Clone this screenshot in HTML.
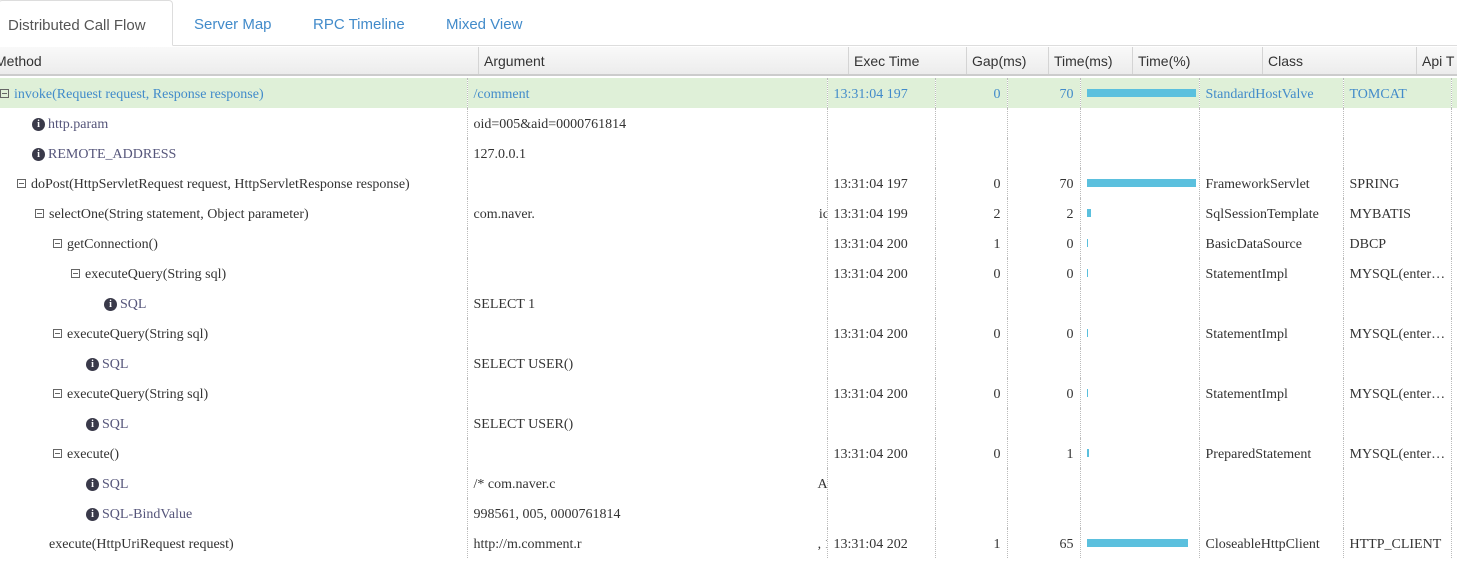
<!DOCTYPE html>
<html><head><meta charset="utf-8"><style>
*{margin:0;padding:0;box-sizing:border-box}
body{width:1457px;height:562px;overflow:hidden;background:#fff;position:relative;font-family:"Liberation Serif",serif;font-size:14px;color:#333}
.tabs{position:absolute;left:0;top:0;width:1457px;height:46px;border-bottom:1px solid #ddd}
.tab{position:absolute;top:0;height:46px;line-height:49px;font-family:"Liberation Sans",sans-serif;font-size:15px;color:#428bca}
.tab.act{left:-2px;width:175px;border:1px solid #ddd;border-bottom:1px solid #fff;border-radius:4px 4px 0 0;color:#555;padding-left:9px;background:#fff}
.hdr{position:absolute;left:0;top:47px;width:1457px;height:29px;background:linear-gradient(#f9f9f9,#ececec);border-bottom:2px solid #ccc;font-family:"Liberation Sans",sans-serif;font-size:14px;color:#333}
.hc{position:absolute;top:0;height:27px;line-height:29px;padding-left:5px;border-left:1px solid #d4d4d4}
table{position:absolute;left:0;top:78px;border-collapse:collapse;table-layout:fixed;width:1457px}
td{height:30px;padding:3px 6px 0;white-space:nowrap;overflow:hidden;border-left:1px dotted #bbb;vertical-align:middle}
td:first-child{border-left:none;padding-left:0}
tr.sel td{background:#dff0d8;color:#428bca}
.r{text-align:right;padding-right:6px}
.bx{display:inline-block;width:9px;height:9px;border:1px solid #666;position:relative;vertical-align:0px;margin-right:5px}
.bx:after{content:"";position:absolute;left:1px;top:3px;width:5px;height:1px;background:#666}
.ic{display:inline-block;width:13px;height:13px;border-radius:50%;background:#3a3a4a;color:#fff;font:bold 10px "Liberation Serif",serif;text-align:center;line-height:13px;margin-right:3px;vertical-align:text-top;margin-top:1px}
.lb{color:#55557a}
.bar{height:8px;background:#5bc0de;margin-top:-3px}
</style></head><body>
<div class="tabs">
<div class="tab act">Distributed Call Flow</div>
<div class="tab" style="left:194px">Server Map</div>
<div class="tab" style="left:313px">RPC Timeline</div>
<div class="tab" style="left:446px">Mixed View</div>
</div>
<div class="hdr">
<div class="hc" style="left:-10px;border:none">Method</div>
<div class="hc" style="left:478px">Argument</div>
<div class="hc" style="left:848px">Exec Time</div>
<div class="hc" style="left:966px">Gap(ms)</div>
<div class="hc" style="left:1048px">Time(ms)</div>
<div class="hc" style="left:1132px">Time(%)</div>
<div class="hc" style="left:1262px">Class</div>
<div class="hc" style="left:1416px">Api T</div>
</div>
<table>
<colgroup><col style="width:467px"><col style="width:360px"><col style="width:108px"><col style="width:72px"><col style="width:73px"><col style="width:119px"><col style="width:144px"><col style="width:108px"><col style="width:6px"></colgroup>
<tr class="sel"><td><span class="bx" style="margin-left:0"></span>invoke(Request request, Response response)</td><td>/comment</td><td>13:31:04 197</td><td class="r">0</td><td class="r">70</td><td><div class="bar" style="width:109px"></div></td><td>StandardHostValve</td><td>TOMCAT</td><td></td></tr>
<tr><td style="padding-left:32px"><span class="ic">i</span><span class="lb">http.param</span></td><td>oid=005&amp;aid=0000761814</td><td></td><td></td><td></td><td></td><td></td><td></td><td></td></tr>
<tr><td style="padding-left:32px"><span class="ic">i</span><span class="lb">REMOTE_ADDRESS</span></td><td>127.0.0.1</td><td></td><td></td><td></td><td></td><td></td><td></td><td></td></tr>
<tr><td style="padding-left:17px"><span class="bx"></span>doPost(HttpServletRequest request, HttpServletResponse response)</td><td></td><td>13:31:04 197</td><td class="r">0</td><td class="r">70</td><td><div class="bar" style="width:109px"></div></td><td>FrameworkServlet</td><td>SPRING</td><td></td></tr>
<tr><td style="padding-left:35px"><span class="bx"></span>selectOne(String statement, Object parameter)</td><td>com.naver.<span style="display:inline-block;width:284px"></span>ic</td><td>13:31:04 199</td><td class="r">2</td><td class="r">2</td><td><div class="bar" style="width:4px"></div></td><td>SqlSessionTemplate</td><td>MYBATIS</td><td></td></tr>
<tr><td style="padding-left:53px"><span class="bx"></span>getConnection()</td><td></td><td>13:31:04 200</td><td class="r">1</td><td class="r">0</td><td><div class="bar" style="width:1px"></div></td><td>BasicDataSource</td><td>DBCP</td><td></td></tr>
<tr><td style="padding-left:71px"><span class="bx"></span>executeQuery(String sql)</td><td></td><td>13:31:04 200</td><td class="r">0</td><td class="r">0</td><td><div class="bar" style="width:1px"></div></td><td>StatementImpl</td><td>MYSQL(enter…</td><td></td></tr>
<tr><td style="padding-left:104px"><span class="ic">i</span><span class="lb">SQL</span></td><td>SELECT 1</td><td></td><td></td><td></td><td></td><td></td><td></td><td></td></tr>
<tr><td style="padding-left:53px"><span class="bx"></span>executeQuery(String sql)</td><td></td><td>13:31:04 200</td><td class="r">0</td><td class="r">0</td><td><div class="bar" style="width:1px"></div></td><td>StatementImpl</td><td>MYSQL(enter…</td><td></td></tr>
<tr><td style="padding-left:86px"><span class="ic">i</span><span class="lb">SQL</span></td><td>SELECT USER()</td><td></td><td></td><td></td><td></td><td></td><td></td><td></td></tr>
<tr><td style="padding-left:53px"><span class="bx"></span>executeQuery(String sql)</td><td></td><td>13:31:04 200</td><td class="r">0</td><td class="r">0</td><td><div class="bar" style="width:1px"></div></td><td>StatementImpl</td><td>MYSQL(enter…</td><td></td></tr>
<tr><td style="padding-left:86px"><span class="ic">i</span><span class="lb">SQL</span></td><td>SELECT USER()</td><td></td><td></td><td></td><td></td><td></td><td></td><td></td></tr>
<tr><td style="padding-left:53px"><span class="bx"></span>execute()</td><td></td><td>13:31:04 200</td><td class="r">0</td><td class="r">1</td><td><div class="bar" style="width:2px"></div></td><td>PreparedStatement</td><td>MYSQL(enter…</td><td></td></tr>
<tr><td style="padding-left:86px"><span class="ic">i</span><span class="lb">SQL</span></td><td>/* com.naver.c<span style="display:inline-block;width:262px"></span>A</td><td></td><td></td><td></td><td></td><td></td><td></td><td></td></tr>
<tr><td style="padding-left:86px"><span class="ic">i</span><span class="lb">SQL-BindValue</span></td><td>998561, 005, 0000761814</td><td></td><td></td><td></td><td></td><td></td><td></td><td></td></tr>
<tr><td style="padding-left:49px">execute(HttpUriRequest request)</td><td>http://m.comment.r<span style="display:inline-block;width:236px"></span>,&nbsp;1</td><td>13:31:04 202</td><td class="r">1</td><td class="r">65</td><td><div class="bar" style="width:101px"></div></td><td>CloseableHttpClient</td><td>HTTP_CLIENT</td><td></td></tr>
</table>
</body></html>
